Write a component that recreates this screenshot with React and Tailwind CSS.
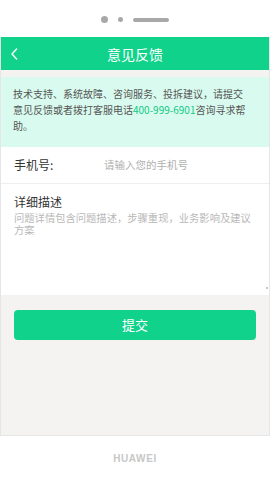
import React from 'react';

const font = { fontFamily: '"Noto Sans CJK SC", "Noto Sans", sans-serif' };

const App = () => {
  return (
    <div className="w-[270px] h-[480px] bg-white flex flex-col overflow-hidden" style={font}>
      {/* phone top bezel */}
      <div className="h-[37px] flex items-center justify-center gap-[10px] pt-[2px]">
        <span className="w-[7px] h-[7px] rounded-full bg-[#a8a8a8]" />
        <span className="w-[5px] h-[5px] rounded-full bg-[#a8a8a8]" />
        <span className="w-[36px] h-[4px] rounded-full bg-[#a8a8a8]" />
      </div>

      {/* screen */}
      <div className="flex-1 flex flex-col bg-[#f4f3f1] border-x border-b border-[#e6e6e6]">
        <div className="h-[33px] bg-[#10d28b] flex items-center relative">
          <svg className="absolute left-[9px] top-[10px]" width="10" height="14" viewBox="0 0 10 14">
            <path d="M7 1.5 L2 7 L7 12.5" fill="none" stroke="#ffffff" strokeWidth="1.4" />
          </svg>
          <div className="flex-1 text-center text-white text-[14px] leading-none">意见反馈</div>
        </div>

        <div className="h-[7px]" />

        <div className="bg-[#d9fbef] pl-[12px] pr-[19px] pt-[9px] pb-[13px] text-[10px] leading-[16px] text-[#555555]">
          技术支持、系统故障、咨询服务、投拆建议，请提交意见反馈或者拨打客服电话<span className="text-[#10c985]">400-999-6901</span>咨询寻求帮助。
        </div>

        <div className="bg-white flex items-center h-[37px] px-[13px] border-b border-[#eeeeee]">
          <span className="w-[90px] text-[12px] text-[#333333]">手机号:</span>
          <span className="text-[10.5px] text-[#b0b0b0]">请输入您的手机号</span>
        </div>

        <div className="bg-white h-[111px] px-[13px] pt-[9px] relative">
          <div className="text-[12px] leading-[18px] text-[#333333]">详细描述</div>
          <div className="text-[10.3px] leading-[12px] text-[#b8b8b8] mt-[1px]">
            问题详情包含问题描述，步骤重现，业务影响及建议方案
          </div>
          <span className="absolute right-[1px] bottom-[6px] w-[2px] h-[2px] bg-[#c8c8c8]" />
        </div>

        <div className="px-[13px] pt-[15px]">
          <div className="h-[30px] rounded-[4px] bg-[#10d28b] flex items-center justify-center text-white text-[13px]">
            提交
          </div>
        </div>
      </div>

      {/* phone bottom bezel */}
      <div className="h-[44px] flex items-center justify-center">
        <span
          className="text-[10px] font-bold tracking-[0.6px] text-[#c8c8c8]"
          style={{ fontFamily: '"Liberation Sans", Arial, sans-serif' }}
        >
          HUAWEI
        </span>
      </div>
    </div>
  );
};

export default App;
